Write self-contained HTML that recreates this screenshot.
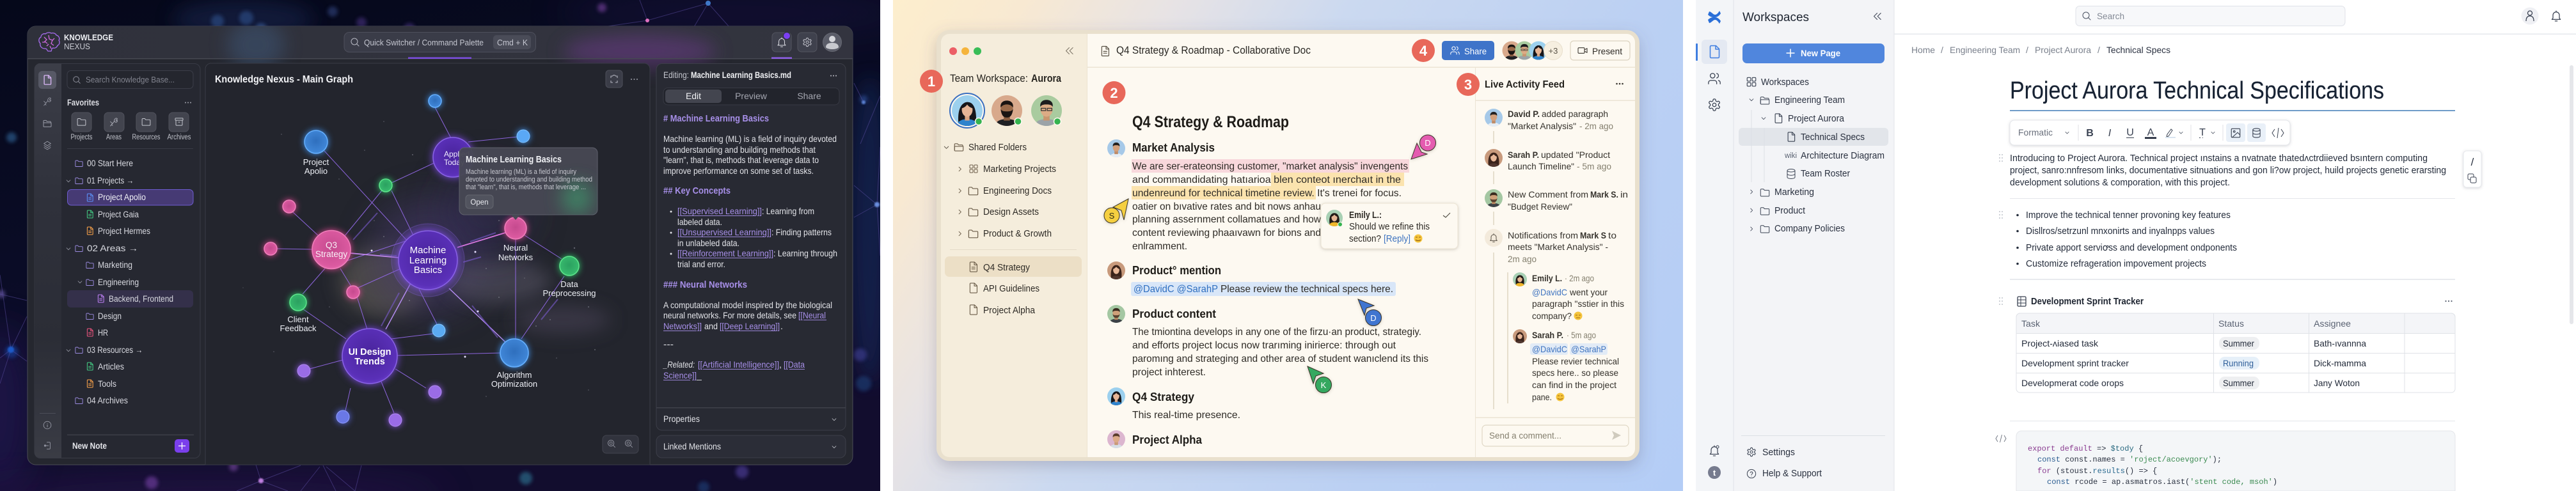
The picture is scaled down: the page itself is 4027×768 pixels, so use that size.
<!DOCTYPE html>
<html lang="en"><head><meta charset="utf-8"><title>UI triptych</title>
<style>
html,body{margin:0;padding:0;background:#fff;width:4027px;height:768px;overflow:hidden}
svg{display:block;font-family:"Liberation Sans",Arial,sans-serif}
.nb{fill:url(#gb);stroke:#66b0ff;stroke-width:1.5;filter:drop-shadow(0 0 5px #3f8fe8)}
.np{fill:url(#gp);stroke:#f07fbb;stroke-width:1.5;filter:drop-shadow(0 0 5px #d9468f)}
.nv{fill:url(#gv);stroke:#8a63e6;stroke-width:1.5;filter:drop-shadow(0 0 6px #7a48e0)}
.ng{fill:url(#gg);stroke:#5ee68c;stroke-width:1.5;filter:drop-shadow(0 0 5px #2fc56a)}
.nl{fill:#9a6ce6;stroke:#b18bf0;stroke-width:1;filter:drop-shadow(0 0 5px #8a55e0)}
.bold{font-weight:700}
.i{font-style:italic}
</style></head><body>
<svg xmlns="http://www.w3.org/2000/svg" width="4027" height="768" viewBox="0 0 4027 768">
<defs>
<linearGradient id="bg1" x1="0" y1="0" x2="0.3" y2="1"><stop offset="0" stop-color="#05081a"/><stop offset=".5" stop-color="#0a0c26"/><stop offset="1" stop-color="#120d2e"/></linearGradient>
<linearGradient id="bg2" gradientUnits="userSpaceOnUse" x1="1396" y1="0" x2="2631" y2="768"><stop offset="0" stop-color="#fdeecd"/><stop offset=".12" stop-color="#f8e9d2"/><stop offset=".26" stop-color="#e7e3e5"/><stop offset=".42" stop-color="#cbd9f0"/><stop offset=".7" stop-color="#bbd0f3"/><stop offset="1" stop-color="#b4cdf6"/></linearGradient>
<linearGradient id="rail" x1="0" y1="0" x2="0" y2="1"><stop offset="0" stop-color="#3c3e48"/><stop offset=".35" stop-color="#2f313b"/><stop offset=".7" stop-color="#2b2d36"/><stop offset="1" stop-color="#3a3c45"/></linearGradient>
<linearGradient id="tbar" x1="0" y1="0" x2="1" y2="0"><stop offset="0" stop-color="#2f313b"/><stop offset="1" stop-color="#33343f"/></linearGradient>
<radialGradient id="gb" cx=".5" cy=".45" r=".6"><stop offset="0" stop-color="#2f6fbd"/><stop offset=".8" stop-color="#3f85d6"/><stop offset="1" stop-color="#5aa7f2"/></radialGradient>
<radialGradient id="gp" cx=".5" cy=".45" r=".6"><stop offset="0" stop-color="#c54a8e"/><stop offset=".8" stop-color="#db5aa0"/><stop offset="1" stop-color="#ee74b6"/></radialGradient>
<radialGradient id="gv" cx=".5" cy=".45" r=".6"><stop offset="0" stop-color="#49249c"/><stop offset=".8" stop-color="#5a30b8"/><stop offset="1" stop-color="#6e43cf"/></radialGradient>
<radialGradient id="gg" cx=".5" cy=".45" r=".6"><stop offset="0" stop-color="#2ba060"/><stop offset=".8" stop-color="#36b86c"/><stop offset="1" stop-color="#4fdb80"/></radialGradient>
<filter id="b1"><feGaussianBlur stdDeviation="1"/></filter>
<filter id="b3" x="-50%" y="-50%" width="200%" height="200%"><feGaussianBlur stdDeviation="3"/></filter>
<filter id="b6" x="-60%" y="-60%" width="220%" height="220%"><feGaussianBlur stdDeviation="6"/></filter>
<filter id="b14" x="-80%" y="-80%" width="260%" height="260%"><feGaussianBlur stdDeviation="14"/></filter>
<filter id="b28" x="-80%" y="-80%" width="260%" height="260%"><feGaussianBlur stdDeviation="28"/></filter>
<filter id="sh" x="-10%" y="-10%" width="120%" height="125%"><feDropShadow dx="0" dy="8" stdDeviation="12" flood-color="#5a5468" flood-opacity=".28"/></filter>
<filter id="sh2" x="-20%" y="-20%" width="140%" height="150%"><feDropShadow dx="0" dy="1" stdDeviation="2.5" flood-color="#6a6050" flood-opacity=".3"/></filter>
<filter id="sh3" x="-20%" y="-30%" width="140%" height="170%"><feDropShadow dx="0" dy="1" stdDeviation="2" flood-color="#556" flood-opacity=".25"/></filter>
<clipPath id="cw1"><rect x="43" y="41" width="1290" height="686" rx="13"/></clipPath>
<clipPath id="cpop"><rect x="718" y="231" width="216" height="105" rx="8"/></clipPath>
<clipPath id="cw2"><rect x="1471" y="53" width="1085" height="662" rx="13"/></clipPath>
<clipPath id="cbg1"><rect x="0" y="0" width="1376" height="768"/></clipPath>
<clipPath id="cav"><circle cx="20" cy="20" r="20"/></clipPath>
<symbol id="file" viewBox="0 0 24 24" fill="none" stroke-linejoin="round" stroke-linecap="round"><path d="M7 2.500h7.500l5 5V20a1.500 1.500 0 0 1-1.500 1.500H7A1.500 1.500 0 0 1 5.500 20V4A1.500 1.500 0 0 1 7 2.500z"/><path d="M14 3v5h5"/></symbol>
<symbol id="filel" viewBox="0 0 24 24" fill="none" stroke-linejoin="round" stroke-linecap="round"><path d="M7 2.500h7.500l5 5V20a1.500 1.500 0 0 1-1.500 1.500H7A1.500 1.500 0 0 1 5.500 20V4A1.500 1.500 0 0 1 7 2.500z"/><path d="M14 3v5h5M9 12.500h6.500M9 16h6.500"/></symbol>
<symbol id="folder" viewBox="0 0 24 24" fill="none" stroke-linejoin="round"><path d="M3 6.500A1.500 1.500 0 0 1 4.500 5H9l2.200 2.500h8.300A1.500 1.500 0 0 1 21 9v9.500a1.500 1.500 0 0 1-1.500 1.500h-15A1.500 1.500 0 0 1 3 18.500z"/></symbol>
<symbol id="fopen" viewBox="0 0 24 24" fill="none" stroke-linejoin="round"><path d="M3 18.500V6.500A1.500 1.500 0 0 1 4.500 5H9l2.200 2.500h7.300A1.500 1.500 0 0 1 20 9v1.500"/><path d="M3 19.500V10.500h18v8a1.500 1.500 0 0 1-1.500 1.500H4z"/></symbol>
<symbol id="search" viewBox="0 0 24 24" fill="none" stroke-linecap="round"><circle cx="10.500" cy="10.500" r="7.500"/><path d="M16 16l5 5"/></symbol>
<symbol id="bell" viewBox="0 0 24 24" fill="none" stroke-linejoin="round" stroke-linecap="round"><path d="M6 16v-5.500a6 6 0 0 1 12 0V16l2 2.500H4z"/><path d="M10 21.500h4M12 2.500v2"/></symbol>
<symbol id="gear" viewBox="0 0 24 24" fill="none"><path d="M12.220 2h-.44a2 2 0 0 0-2 2v.18a2 2 0 0 1-1 1.730l-.43.25a2 2 0 0 1-2 0l-.15-.08a2 2 0 0 0-2.730.73l-.22.38a2 2 0 0 0 .73 2.730l.15.1a2 2 0 0 1 1 1.720v.51a2 2 0 0 1-1 1.740l-.15.09a2 2 0 0 0-.73 2.730l.22.38a2 2 0 0 0 2.730.73l.15-.08a2 2 0 0 1 2 0l.43.25a2 2 0 0 1 1 1.730V20a2 2 0 0 0 2 2h.44a2 2 0 0 0 2-2v-.18a2 2 0 0 1 1-1.730l.43-.25a2 2 0 0 1 2 0l.15.08a2 2 0 0 0 2.730-.73l.22-.39a2 2 0 0 0-.73-2.730l-.15-.08a2 2 0 0 1-1-1.740v-.5a2 2 0 0 1 1-1.740l.15-.09a2 2 0 0 0 .73-2.730l-.22-.38a2 2 0 0 0-2.730-.73l-.15.08a2 2 0 0 1-2 0l-.43-.25a2 2 0 0 1-1-1.730V4a2 2 0 0 0-2-2z"/><circle cx="12" cy="12" r="3"/></symbol>
<symbol id="users" viewBox="0 0 24 24" fill="none" stroke-linecap="round"><path d="M16 21v-2a4 4 0 0 0-4-4H6a4 4 0 0 0-4 4v2"/><circle cx="9" cy="7" r="4"/><path d="M22 21v-2a4 4 0 0 0-3-3.870M16 3.130a4 4 0 0 1 0 7.750"/></symbol>
<symbol id="grid" viewBox="0 0 24 24" fill="none"><rect x="3" y="3" width="7.500" height="7.500" rx="1.500"/><rect x="13.500" y="3" width="7.500" height="7.500" rx="1.500"/><rect x="3" y="13.500" width="7.500" height="7.500" rx="1.500"/><rect x="13.500" y="13.500" width="7.500" height="7.500" rx="1.500"/></symbol>
<symbol id="db" viewBox="0 0 24 24" fill="none"><ellipse cx="12" cy="5" rx="8" ry="3"/><path d="M4 5v14c0 1.700 3.600 3 8 3s8-1.300 8-3V5M4 12c0 1.700 3.600 3 8 3s8-1.300 8-3"/></symbol>
<symbol id="chd" viewBox="0 0 24 24" fill="none" stroke-linecap="round" stroke-linejoin="round"><path d="M5 9l7 7 7-7"/></symbol>
<symbol id="chr" viewBox="0 0 24 24" fill="none" stroke-linecap="round" stroke-linejoin="round"><path d="M9 5l7 7-7 7"/></symbol>
<symbol id="dbl" viewBox="0 0 24 24" fill="none" stroke-linecap="round" stroke-linejoin="round"><path d="M12 5l-7 7 7 7M20 5l-7 7 7 7"/></symbol>
<symbol id="layers" viewBox="0 0 24 24" fill="none" stroke-linejoin="round"><path d="M12 2.500l8 5-8 5-8-5z"/><path d="M4 12l8 5 8-5M4 16.500l8 5 8-5"/></symbol>
<symbol id="tool" viewBox="0 0 24 24" fill="none" stroke-linecap="round"><path d="M4 21l9-11M15 4c2-2 5-1 5 1l-3 2 1 2 2-1c1 3-2 5-5 4l-2-3c-.5-2 .5-3 2-5zM4 11l5 5M7 18l2 2"/></symbol>
<symbol id="archive" viewBox="0 0 24 24" fill="none" stroke-linejoin="round"><rect x="3" y="3.500" width="18" height="5" rx="1"/><path d="M4.500 8.500v10.500a1.500 1.500 0 0 0 1.500 1.500h12a1.500 1.500 0 0 0 1.500-1.500V8.500M10 13h4"/></symbol>
<symbol id="info" viewBox="0 0 24 24" fill="none" stroke-linecap="round"><circle cx="12" cy="12" r="10"/><path d="M12 11v6M12 7.500v.5"/></symbol>
<symbol id="help" viewBox="0 0 24 24" fill="none" stroke-linecap="round"><circle cx="12" cy="12" r="10"/><path d="M9.200 9.200a3 3 0 0 1 5.700 1c0 2-2.900 2.500-2.900 4M12 17.500v.2"/></symbol>
<symbol id="exit" viewBox="0 0 24 24" fill="none" stroke-linecap="round"><path d="M11 3h7a1.500 1.500 0 0 1 1.500 1.500v15A1.500 1.500 0 0 1 18 21h-7M15 12H5"/><circle cx="6" cy="12" r="2"/></symbol>
<symbol id="video" viewBox="0 0 24 24" fill="none" stroke-linejoin="round"><rect x="1.500" y="5.500" width="15" height="13" rx="2"/><path d="M16.500 10.500l6-3.500v10l-6-3.500"/></symbol>
<symbol id="img" viewBox="0 0 24 24" fill="none" stroke-linejoin="round"><rect x="3" y="3" width="18" height="18" rx="1.500"/><circle cx="9" cy="9" r="1.800"/><path d="M21 16l-5-5L5 21"/></symbol>
<symbol id="zoomi" viewBox="0 0 24 24" fill="none" stroke-linecap="round"><circle cx="10.500" cy="10.500" r="8"/><circle cx="10.500" cy="10.500" r="3.500"/><path d="M16.500 16.500l5 5"/></symbol>
<symbol id="av1" viewBox="0 0 40 40"><g clip-path="url(#cav)"><rect width="40" height="40" fill="#9cd0ee"/><path d="M9 40c-2-14 0-30 11-31s13 17 11 31z" fill="#17161a"/><path d="M5 42c1-8 8-11 15-11s14 3 15 11z" fill="#2f83cc"/><rect x="17" y="24" width="6" height="9" fill="#d9a583"/><ellipse cx="20" cy="19" rx="7" ry="9" fill="#e6b596"/><path d="M13 17c0-6 4-8 7-8s7 2 7 8c-3-1-6-3-7-5-2 3-4 4-7 5z" fill="#17161a"/></g></symbol>
<symbol id="av2" viewBox="0 0 40 40"><g clip-path="url(#cav)"><rect width="40" height="40" fill="#d8a98c"/><path d="M4 42c1-9 8-11 16-11s15 2 16 11z" fill="#1f2024"/><rect x="16" y="24" width="8" height="9" fill="#8a5d40"/><ellipse cx="20" cy="18" rx="8" ry="10" fill="#9a6a4a"/><path d="M12 18c1 10 5 11 8 11s7-1 8-11c-2 3-4 3-8 3s-6 0-8-3z" fill="#1a1412"/><path d="M12 16c-1-6 3-9 8-9s9 3 8 9c-2-3-5-4-8-4s-6 1-8 4z" fill="#1a1412"/></g></symbol>
<symbol id="av3" viewBox="0 0 40 40"><g clip-path="url(#cav)"><rect width="40" height="40" fill="#a9cb9f"/><path d="M4 42c1-9 8-11 16-11s15 2 16 11z" fill="#9ba3a8"/><rect x="16" y="24" width="8" height="9" fill="#c9966f"/><ellipse cx="20" cy="18" rx="8" ry="10" fill="#dcab85"/><path d="M12 15c-1-6 3-9 8-9s9 3 8 9c-2-3-5-3-8-3s-6 0-8 3z" fill="#1d1c1e"/><path d="M13 17h6v3h-6zM21 17h6v3h-6z" fill="none" stroke="#333" stroke-width="1"/></g></symbol>
<symbol id="av4" viewBox="0 0 40 40"><g clip-path="url(#cav)"><rect width="40" height="40" fill="#a6c9e8"/><path d="M5 42c1-9 8-11 15-11s14 2 15 11z" fill="#e6eef5"/><rect x="16" y="24" width="8" height="9" fill="#bf8c68"/><ellipse cx="20" cy="18" rx="7.500" ry="9.500" fill="#d3a07c"/><path d="M12.500 16c-1-6 3-9 7.500-9s8.500 3 7.500 9c-2-3-4.500-3-7.500-3s-5.500 0-7.500 3z" fill="#23201f"/></g></symbol>
<symbol id="av5" viewBox="0 0 40 40"><g clip-path="url(#cav)"><rect width="40" height="40" fill="#c89a7c"/><path d="M9 40c-3-14 0-32 11-32s14 18 11 32z" fill="#3a231a"/><path d="M7 42c1-8 7-10 13-10s12 2 13 10z" fill="#50362e"/><ellipse cx="20" cy="19" rx="7" ry="9" fill="#e7b798"/><path d="M13 17c0-6 4-8 7-8s7 2 7 8c-3-1-5-3-7-5-2 2-4 4-7 5z" fill="#3a231a"/></g></symbol>
<symbol id="av6" viewBox="0 0 40 40"><g clip-path="url(#cav)"><rect width="40" height="40" fill="#a4c7a2"/><path d="M4 42c1-9 8-11 16-11s15 2 16 11z" fill="#3c4146"/><rect x="16" y="24" width="8" height="9" fill="#b9875f"/><ellipse cx="20" cy="18" rx="8" ry="10" fill="#cfa079"/><path d="M12 20c1 8 5 9 8 9s7-1 8-9c-2 3-4 3-8 3s-6 0-8-3z" fill="#5a4230"/><path d="M12 16c-1-6 3-9 8-9s9 3 8 9c-2-3-5-3-8-3s-6 0-8 3z" fill="#3a2a1e"/></g></symbol>
<symbol id="av7" viewBox="0 0 40 40"><g clip-path="url(#cav)"><rect width="40" height="40" fill="#a8d0b4"/><path d="M9 36c-3-13 0-28 11-28s14 15 11 28z" fill="#221a16"/><path d="M6 42c1-9 7-12 14-12s13 3 14 12z" fill="#f0b62a"/><ellipse cx="20" cy="19" rx="7" ry="9" fill="#e5b594"/><path d="M13 17c0-6 4-8 7-8s7 2 7 8c-3-1-5-3-7-5-2 2-4 4-7 5z" fill="#221a16"/></g></symbol>
<symbol id="av8" viewBox="0 0 40 40"><g clip-path="url(#cav)"><rect width="40" height="40" fill="#dcb6cf"/><path d="M5 42c1-9 8-11 15-11s14 2 15 11z" fill="#d6dee6"/><rect x="16" y="24" width="8" height="9" fill="#c99a78"/><ellipse cx="20" cy="18" rx="7.500" ry="9.500" fill="#dcaa88"/><path d="M12.500 16c-1-6 3-9 7.500-9s8.500 3 7.500 9c-2-3-4.500-3-7.500-3s-5.500 0-7.500 3z" fill="#5a3c2c"/></g></symbol>
</defs>

<!-- ===== PANEL 1 BACKGROUND ===== -->
<rect x="0" y="0" width="1376" height="768" fill="url(#bg1)"/>
<g clip-path="url(#cbg1)">
<ellipse cx="1150" cy="20" rx="280" ry="34" fill="#2a1e58" opacity=".3" filter="url(#b28)"/>
<ellipse cx="380" cy="30" rx="110" ry="30" fill="#1a2a55" opacity=".5" filter="url(#b14)"/>
<ellipse cx="0" cy="640" rx="50" ry="130" fill="#2a1a60" opacity=".5" filter="url(#b28)"/>
<ellipse cx="320" cy="775" rx="380" ry="26" fill="#3a1a66" opacity=".4" filter="url(#b28)"/>
<ellipse cx="1360" cy="360" rx="30" ry="240" fill="#182a5c" opacity=".6" filter="url(#b14)"/>
<g opacity=".7" filter="url(#b3)">
<circle cx="340" cy="33" r="10" fill="#2c4a80"/><circle cx="385" cy="28" r="11" fill="#2c4a80"/><circle cx="408" cy="45" r="9" fill="#34558f"/><circle cx="520" cy="18" r="8" fill="#2c3a70"/><circle cx="565" cy="35" r="8" fill="#3c2c70"/><circle cx="640" cy="45" r="9" fill="#3c2c70"/>
<circle cx="18" cy="215" r="8" fill="#2c5a8a"/><circle cx="2" cy="460" r="6" fill="#6a5aa8"/><circle cx="18" cy="550" r="10" fill="#173a8f"/><circle cx="941" cy="12" r="7" fill="#6a3a90"/>
<circle cx="237" cy="755" r="10" fill="#6a3a98"/><circle cx="365" cy="730" r="7" fill="#6a4090"/><circle cx="822" cy="748" r="10" fill="#2a6a88"/><circle cx="1160" cy="738" r="10" fill="#4a3a90"/><circle cx="1345" cy="555" r="10" fill="#3a3a8a"/><circle cx="1350" cy="600" r="12" fill="#1e3a70"/><circle cx="1100" cy="762" r="9" fill="#1e3a70"/><circle cx="1350" cy="155" r="6" fill="#2a4a90"/>
</g>
<g stroke="#5d50a5" stroke-width="1" fill="none" opacity=".5">
<path d="M1012 32L1107 5M1012 32L1000 0M1012 32L930 44M1107 5L1140 42M1107 5L1085 42"/>
<path d="M17 547L0 600M17 547L42 495M17 547L42 565M17 547L0 430M17 547L0 560M0 460L42 470"/>
<path d="M408 752L400 727M408 752L470 728M408 752L450 768M408 752L370 768M500 730L470 768M510 730L555 768M505 728L525 768M565 728L555 768"/>
<path d="M1345 225L1376 150M1371 320L1335 290M1371 320L1376 230M1350 160L1335 130M1371 320L1335 340M1371 320L1376 400"/>
</g>
<circle cx="1012" cy="32" r="3" fill="#e070c0"/><circle cx="1107" cy="5" r="4" fill="#3f78c8"/><circle cx="17" cy="547" r="5" fill="#1e5ac8" filter="url(#b1)"/><circle cx="408" cy="752" r="4" fill="#c080e0" filter="url(#b1)"/><circle cx="1371" cy="320" r="4" fill="#6a8fe0" filter="url(#b1)"/><circle cx="1350" cy="160" r="3" fill="#5a80d0" filter="url(#b1)"/>
</g>

<!-- WINDOW 1 -->
<rect x="43" y="41" width="1290" height="686" rx="13" fill="#25272f" stroke="#4a4c56" stroke-width="1"/>
<g clip-path="url(#cw1)">
<rect x="43" y="41" width="1290" height="50" fill="url(#tbar)"/>
<ellipse cx="1000" cy="80" rx="120" ry="26" fill="#6a3a88" opacity=".55" filter="url(#b14)"/>
<ellipse cx="400" cy="70" rx="45" ry="40" fill="#3e5474" opacity=".55" filter="url(#b14)"/>
<rect x="43" y="91" width="1290" height="1.500" fill="#464852"/>
<rect x="638" y="89.500" width="99" height="2.500" fill="#7c4de0"/>
<rect x="1206" y="89.500" width="32" height="2.500" fill="#9060e8"/>
</g>
<!-- logo brain -->
<g fill="none" stroke="#a86df0" stroke-width="1.300">
<path d="M75 80c-3-3-1-4-5-4-5 0-8-4-7-8-3-3-3-8 1-10 0-4 4-6 7-5 2-2 6-3 9-1 3-1 7 0 8 3 4 1 6 5 4 8 2 3 1 7-2 8-1 3-4 5-7 4-2 0-2 2-3 5z"/>
<path d="M69 58l4 4-3 3 4 3M76 55l1 6 5 2-2 5 4 3M85 60l-3 3M66 66l4 0M73 72l3-3M78 72l2 4" stroke="#d06ae0"/>
</g>
<g fill="#eceef2">
<text x="100" y="63" font-size="12.500" font-weight="700" textLength="77" lengthAdjust="spacingAndGlyphs">KNOWLEDGE</text>
<text x="100" y="77" font-size="12.500" fill="#c8cad2" textLength="41" lengthAdjust="spacingAndGlyphs">NEXUS</text>
</g>
<!-- search -->
<rect x="538" y="50.500" width="299.500" height="31" rx="8" fill="#3a3c48" stroke="#4d4f5b"/>
<use href="#search" x="547" y="58" width="16" height="16" stroke="#b8bac4" stroke-width="1.500"/>
<text x="569" y="71" font-size="13" fill="#c4c6d0" textLength="187" lengthAdjust="spacingAndGlyphs">Quick Switcher / Command Palette</text>
<rect x="771" y="55" width="59" height="22" rx="5" fill="#4a4c58"/>
<text x="777" y="71" font-size="13" fill="#c4c6d0" textLength="48" lengthAdjust="spacingAndGlyphs">Cmd + K</text>
<!-- top right -->
<rect x="1207" y="51" width="30" height="30" rx="6" fill="#3f414d" stroke="#53555f"/>
<use href="#bell" x="1213" y="57" width="18" height="18" stroke="#d8d9e0" stroke-width="1.400"/>
<circle cx="1230" cy="56" r="5.500" fill="#7b3ff2" stroke="#2e2f39" stroke-width="1"/>
<rect x="1247" y="51" width="30" height="30" rx="6" fill="#3f414d" stroke="#53555f"/>
<use href="#gear" x="1254" y="58" width="16" height="16" stroke="#c8c9d2" stroke-width="1.500"/>
<circle cx="1301" cy="66" r="14.500" fill="#5a5c68" stroke="#686a74"/>
<circle cx="1301" cy="61" r="5" fill="#d6d7dc"/><path d="M1291 74c0-5 4-7 10-7s10 2 10 7c-3 4-17 4-20 0z" fill="#c8c9cf"/>

<!-- left sidebar card -->
<rect x="54" y="99.500" width="259" height="617" rx="9" fill="#262831" stroke="#393b46"/>
<path d="M63 99.500H96V716H63a9 9 0 0 1-9-9V108a9 9 0 0 1 9-9z" fill="url(#rail)"/>
<rect x="60" y="111" width="28" height="28" rx="6" fill="#575966"/>
<use href="#file" x="65" y="116" width="18" height="18" stroke="#d8b6f5" stroke-width="1.800"/>
<use href="#tool" x="66" y="151" width="16" height="16" stroke="#8e909c" stroke-width="1.400"/>
<use href="#fopen" x="66" y="185" width="16" height="16" stroke="#9a9ca8" stroke-width="1.500"/>
<use href="#layers" x="66" y="219" width="16" height="17" stroke="#9a9ca8" stroke-width="1.400"/>
<rect x="62" y="646" width="25" height="1" fill="#4c4e58"/>
<use href="#info" x="67" y="658" width="14" height="14" stroke="#9a9ca8" stroke-width="1.500"/>
<use href="#exit" x="67" y="690" width="14" height="14" stroke="#9a9ca8" stroke-width="1.500"/>
<rect x="105" y="110.500" width="197" height="28" rx="6" fill="#24262e" stroke="#3c3e49"/>
<use href="#search" x="113" y="118" width="14" height="14" stroke="#8e909c" stroke-width="1.600"/>
<text x="134" y="129" font-size="13" fill="#81838e" textLength="139" lengthAdjust="spacingAndGlyphs">Search Knowledge Base...</text>
<text x="105" y="165" font-size="13.500" font-weight="700" fill="#dcdde3" textLength="50" lengthAdjust="spacingAndGlyphs">Favorites</text>
<g fill="#a0a2ac"><circle cx="290" cy="160.500" r="1"/><circle cx="294" cy="160.500" r="1"/><circle cx="298" cy="160.500" r="1"/></g>
<g fill="#42444e" stroke="#50525c">
<rect x="112" y="176" width="31" height="30" rx="6"/><rect x="163" y="176" width="31" height="30" rx="6"/><rect x="213" y="176" width="31" height="30" rx="6"/><rect x="264" y="176" width="31" height="30" rx="6"/></g>
<use href="#folder" x="119" y="182" width="17" height="17" stroke="#c4c6ce" stroke-width="1.400"/>
<use href="#tool" x="170" y="183" width="16" height="16" stroke="#a4a6b0" stroke-width="1.500"/>
<use href="#folder" x="220" y="182" width="17" height="17" stroke="#c4c6ce" stroke-width="1.400"/>
<use href="#archive" x="272" y="182" width="16" height="17" stroke="#c4c6ce" stroke-width="1.500"/>
<g font-size="11.500" fill="#c2c4cc" text-anchor="middle">
<text x="127.500" y="218" textLength="34" lengthAdjust="spacingAndGlyphs">Projects</text><text x="178" y="218" textLength="24" lengthAdjust="spacingAndGlyphs">Areas</text><text x="228.500" y="218" textLength="44" lengthAdjust="spacingAndGlyphs">Resources</text><text x="280" y="218" textLength="37" lengthAdjust="spacingAndGlyphs">Archives</text></g>
<rect x="105" y="232" width="197" height="1" fill="#3a3c46"/>
<!-- tree -->
<rect x="105.500" y="296.500" width="196.500" height="24.500" rx="6" fill="#463a74" stroke="#6e5cd0"/>
<rect x="105" y="454" width="197" height="27" rx="6" fill="#34304a"/>
<g stroke="#9b8be0" stroke-width="1.500">
<use href="#folder" x="116" y="248" width="15" height="15"/><use href="#folder" x="116" y="275" width="15" height="15"/><use href="#folder" x="116" y="381" width="15" height="15"/>
<use href="#folder" x="133" y="407" width="15" height="15"/><use href="#folder" x="133" y="434" width="15" height="15"/><use href="#folder" x="133" y="487" width="15" height="15"/>
<use href="#folder" x="116" y="540" width="15" height="15"/><use href="#folder" x="116" y="619" width="15" height="15"/></g>
<g stroke="#9a9ca8" stroke-width="2">
<use href="#chd" x="102" y="278" width="10" height="10"/><use href="#chd" x="102" y="384" width="10" height="10"/><use href="#chd" x="120" y="436" width="10" height="10"/><use href="#chd" x="102" y="543" width="10" height="10"/></g>
<use href="#filel" x="133" y="301" width="15" height="16" stroke="#5a8cf0" stroke-width="1.800"/>
<use href="#filel" x="133" y="327" width="15" height="16" stroke="#42c07e" stroke-width="1.800"/>
<use href="#filel" x="133" y="353" width="15" height="16" stroke="#ec9a48" stroke-width="1.800"/>
<use href="#filel" x="150" y="459" width="15" height="16" stroke="#b57bea" stroke-width="1.800"/>
<use href="#filel" x="133" y="512" width="15" height="16" stroke="#e0527a" stroke-width="1.800"/>
<use href="#filel" x="133" y="565" width="15" height="16" stroke="#42c07e" stroke-width="1.800"/>
<use href="#filel" x="133" y="592" width="15" height="16" stroke="#ec9a48" stroke-width="1.800"/>
<g font-size="13.500" fill="#d8d9e0">
<text x="136" y="260" textLength="72" lengthAdjust="spacingAndGlyphs">00 Start Here</text>
<text x="136" y="287" textLength="73" lengthAdjust="spacingAndGlyphs">01 Projects →</text>
<text x="153" y="313" fill="#f0f0f6" textLength="75" lengthAdjust="spacingAndGlyphs">Project Apolio</text>
<text x="153" y="340" textLength="64" lengthAdjust="spacingAndGlyphs">Project Gaia</text>
<text x="153" y="366" textLength="82" lengthAdjust="spacingAndGlyphs">Project Hermes</text>
<text x="136" y="393" textLength="80" lengthAdjust="spacingAndGlyphs">02 Areas →</text>
<text x="153" y="419" textLength="54" lengthAdjust="spacingAndGlyphs">Marketing</text>
<text x="153" y="446" textLength="64" lengthAdjust="spacingAndGlyphs">Engineering</text>
<text x="170" y="472" textLength="101" lengthAdjust="spacingAndGlyphs">Backend, Frontend</text>
<text x="153" y="499" textLength="37" lengthAdjust="spacingAndGlyphs">Design</text>
<text x="153" y="525" textLength="16" lengthAdjust="spacingAndGlyphs">HR</text>
<text x="136" y="552" textLength="87" lengthAdjust="spacingAndGlyphs">03 Resources →</text>
<text x="153" y="578" textLength="41" lengthAdjust="spacingAndGlyphs">Articles</text>
<text x="153" y="605" textLength="29" lengthAdjust="spacingAndGlyphs">Tools</text>
<text x="136" y="631" textLength="64" lengthAdjust="spacingAndGlyphs">04 Archives</text>
</g>
<rect x="105" y="679.500" width="198" height="1.500" fill="#3c3e48"/>
<text x="113" y="702" font-size="13.500" font-weight="700" fill="#e4e5ea" textLength="54" lengthAdjust="spacingAndGlyphs">New Note</text>
<rect x="273" y="687" width="23" height="21" rx="5" fill="#7a3fec"/>
<path d="M284.500 692v11M279 697.500h11" stroke="#fff" stroke-width="1.300"/>

<!-- graph panel -->
<path d="M321 727V108a9 9 0 0 1 9-9h677a9 9 0 0 1 9 9v619z" fill="#23252d" stroke="#3a3c46"/>
<g clip-path="url(#cw1)">
<ellipse cx="600" cy="440" rx="70" ry="55" fill="#6a665c" opacity=".55" filter="url(#b14)"/>
<ellipse cx="670" cy="400" rx="90" ry="90" fill="#4a3a70" opacity=".5" filter="url(#b28)"/>
<ellipse cx="780" cy="440" rx="80" ry="34" fill="#5a5668" opacity=".55" filter="url(#b14)"/>
<ellipse cx="880" cy="500" rx="75" ry="22" fill="#4c4458" opacity=".55" filter="url(#b14)"/>
<ellipse cx="760" cy="330" rx="70" ry="70" fill="#332a55" opacity=".5" filter="url(#b28)"/>
</g>
<g fill="#8a8c98" opacity=".6"><circle cx="440" cy="210" r=".8"/><circle cx="570" cy="235" r=".8"/><circle cx="600" cy="190" r=".8"/><circle cx="645" cy="242" r="1"/><circle cx="530" cy="280" r=".8"/><circle cx="515" cy="480" r=".8"/><circle cx="428" cy="550" r=".8"/><circle cx="380" cy="450" r=".6"/><circle cx="600" cy="370" r="1"/><circle cx="612" cy="400" r=".8"/><circle cx="585" cy="345" r=".8"/><circle cx="640" cy="470" r="1"/><circle cx="760" cy="420" r="1"/><circle cx="780" cy="465" r="1"/><circle cx="820" cy="435" r=".8"/><circle cx="860" cy="500" r="1"/><circle cx="930" cy="547" r="1"/><circle cx="920" cy="480" r="1"/><circle cx="838" cy="510" r="1"/><circle cx="898" cy="388" r="1.200"/><circle cx="860" cy="330" r="1"/><circle cx="780" cy="345" r="1"/><circle cx="760" cy="620" r=".8"/><circle cx="870" cy="560" r=".8"/><circle cx="920" cy="610" r=".8"/></g>
<!-- edges -->
<g fill="none" stroke="#9268e6" stroke-width="1" opacity=".95">
<path d="M507 236L636 376M680 168L705 216M702 244L612 286M612 286L700 245M597 298L538 370M612 298L648 372M457 331L497 368M433 389L488 390M542 408L640 375M508 420L473 460M532 420L549 448M558 464L574 515M560 450L640 414M473 483L541 530M484 577L536 563M612 530L677 522M618 577L666 607M548 607L540 642M596 597L616 646M621 556L785 552M655 452L683 507M732 222L809 214M806 375V530M820 368L878 405M882 432L815 530"/>
</g>
<g fill="none" stroke="#b48cf0" stroke-width="1.500"><path d="M603 515L642 443"/><path d="M702 451L790 535"/></g>
<path d="M715 387L790 364" fill="none" stroke="#d877e0" stroke-width="1.800"/>
<path d="M548 396L624 403" fill="none" stroke="#c288ee" stroke-width="1.800"/>
<g fill="none" stroke="#7b5cd0" stroke-width="2" opacity=".6"><path d="M552 375l38-42M596 510l28-52M724 410l28-8M735 378l40-14M738 478l40 50M620 400l-26-2M846 500l26-32"/></g>
<g fill="#e8e0ff"><circle cx="743" cy="394" r="1.500"/><circle cx="747" cy="487" r="1.500"/><circle cx="727" cy="558" r="1.500"/><circle cx="581" cy="392" r="1.500"/></g>
<!-- nodes -->
<circle cx="669" cy="407" r="57" fill="#6a4cb8" fill-opacity=".22" stroke="#7c5cc8" stroke-opacity=".45"/>
<circle cx="680" cy="158" r="10" class="nb"/>
<circle cx="494" cy="222" r="18" class="nb"/>
<circle cx="603" cy="290" r="10" class="ng"/>
<circle cx="452" cy="323" r="10" class="np"/>
<circle cx="423" cy="389" r="10" class="np"/>
<circle cx="518" cy="390.500" r="30" class="np"/>
<circle cx="669" cy="407" r="46" class="nv"/>
<circle cx="708" cy="246" r="31" class="nv"/>
<circle cx="818" cy="213" r="10" fill="#5aa8f6" stroke="#84c4ff" style="filter:drop-shadow(0 0 5px #3f8fe8)"/>
<circle cx="806" cy="357" r="17" class="np"/>
<circle cx="890" cy="416" r="15" class="ng"/>
<circle cx="804" cy="552" r="22" class="nb"/>
<circle cx="578" cy="557" r="43" class="nv"/>
<circle cx="552" cy="457" r="10" class="np"/>
<circle cx="466" cy="473" r="13" class="ng"/>
<circle cx="475" cy="580" r="10" class="nl"/>
<circle cx="686" cy="517" r="10" fill="#5aaaf2" stroke="#8acaff" style="filter:drop-shadow(0 0 5px #3f8fe8)"/>
<circle cx="680" cy="613" r="10" class="nl"/>
<circle cx="536" cy="652" r="10" fill="#6a78e6" stroke="#93a0ff" style="filter:drop-shadow(0 0 5px #5a6ae8)"/>
<circle cx="618" cy="657" r="10" class="nl"/>
<g fill="#eef0f6" text-anchor="middle" font-size="13">
<text x="494" y="258">Project</text><text x="494" y="272">Apolio</text>
<text x="518" y="388" font-size="13.500" fill="#f8f0f6">Q3</text><text x="518" y="402" font-size="13.500" fill="#f8f0f6">Strategy</text>
<text x="466" y="504">Client</text><text x="466" y="518">Feedback</text>
<text x="806" y="392">Neural</text><text x="806" y="407">Networks</text>
<text x="890" y="449">Data</text><text x="890" y="463">Preprocessing</text>
<text x="804" y="591">Algorithm</text><text x="804" y="605">Optimization</text>
</g>
<g fill="#fff" text-anchor="middle" font-size="14.500" font-weight="700">
<text x="669" y="396" font-weight="400" font-size="15">Machine</text><text x="669" y="412" font-weight="400" font-size="15">Learning</text><text x="669" y="427" font-weight="400" font-size="15">Basics</text>
<text x="578" y="555">UI Design</text><text x="578" y="570">Trends</text>
</g>
<g fill="#f0ecff" font-size="12"><text x="694" y="245">Applied</text><text x="694" y="258">Today</text></g>
<!-- popover -->
<rect x="718" y="231" width="216" height="105" rx="8" fill="#474853" fill-opacity=".96" stroke="#5e606c"/>
<g clip-path="url(#cpop)"><ellipse cx="902" cy="310" rx="24" ry="26" fill="#3f8a68" opacity=".85" filter="url(#b14)"/></g>
<path d="M799 336l7 8 7-8z" fill="#474853"/>
<text x="728" y="254" font-size="14.500" font-weight="700" fill="#f0f1f5" textLength="150" lengthAdjust="spacingAndGlyphs">Machine Learning Basics</text>
<g font-size="11" fill="#c6c7cf">
<text x="728" y="272" textLength="173" lengthAdjust="spacingAndGlyphs">Machine learning (ML) is a field of inquiry</text>
<text x="728" y="284" textLength="198" lengthAdjust="spacingAndGlyphs">devoted to understanding and building method</text>
<text x="728" y="296" textLength="188" lengthAdjust="spacingAndGlyphs">that "learn", that is, methods that leverage ...</text>
</g>
<rect x="728" y="305" width="43" height="21" rx="5" fill="#51535e" stroke="#63656f"/>
<text x="749.500" y="320" font-size="11.500" fill="#e8e9ee" text-anchor="middle">Open</text>
<!-- graph title & ctrl -->
<text x="336" y="129" font-size="16" font-weight="700" fill="#f2f3f6" textLength="216" lengthAdjust="spacingAndGlyphs">Knowledge Nexus - Main Graph</text>
<rect x="947" y="110" width="26" height="27" rx="5" fill="#3a3c47" stroke="#4c4e59"/>
<path d="M955 122v-3h3M965 122v-3h-3M955 126v3h3M965 126v3h-3M958 119c0-2 4-2 4 0" fill="none" stroke="#b0b2bc" stroke-width="1.100"/>
<g fill="#a0a2ac"><circle cx="987" cy="124" r="1"/><circle cx="991.500" cy="124" r="1"/><circle cx="996" cy="124" r="1"/></g>
<rect x="942" y="681" width="56" height="28" rx="6" fill="#31333d" stroke="#42444e"/>
<use href="#zoomi" x="949" y="687" width="14" height="14" stroke="#9a9ca8" stroke-width="1.500"/>
<use href="#zoomi" x="976" y="687" width="14" height="14" stroke="#9a9ca8" stroke-width="1.500"/>

<!-- right panel -->
<rect x="1026" y="99.500" width="296" height="573.500" rx="9" fill="#282a33" stroke="#3c3e48"/>
<rect x="1026" y="681" width="296" height="35" rx="9" fill="#2b2d37" stroke="#3c3e48"/>
<rect x="1026" y="637" width="296" height="1.500" fill="#3e404a"/>
<text x="1037" y="122" font-size="14" fill="#c4c6ce" textLength="40" lengthAdjust="spacingAndGlyphs">Editing:</text>
<text x="1080" y="122" font-size="14" font-weight="700" fill="#f0f1f4" textLength="157" lengthAdjust="spacingAndGlyphs">Machine Learning Basics.md</text>
<g fill="#c0c2ca"><circle cx="1299" cy="118.500" r="1"/><circle cx="1303" cy="118.500" r="1"/><circle cx="1307" cy="118.500" r="1"/></g>
<rect x="1037" y="137.500" width="275" height="26.500" rx="7" fill="#22242c" stroke="#383a44"/>
<rect x="1040" y="140" width="88" height="21" rx="5" fill="#43454f"/>
<g font-size="14" text-anchor="middle"><text x="1084" y="155" fill="#f0f1f4">Edit</text><text x="1174" y="155" fill="#a4a6b0">Preview</text><text x="1265" y="155" fill="#a4a6b0">Share</text></g>
<g font-size="15" font-weight="700" fill="#a78fe8">
<text x="1037" y="190" textLength="165" lengthAdjust="spacingAndGlyphs"># Machine Learning Basics</text>
<text x="1037" y="303" textLength="105" lengthAdjust="spacingAndGlyphs">## Key Concepts</text>
<text x="1037" y="450" textLength="131" lengthAdjust="spacingAndGlyphs">### Neural Networks</text></g>
<g font-size="14" fill="#e2e3e8">
<text x="1037" y="222" textLength="271" lengthAdjust="spacingAndGlyphs">Machine learning (ML) is a field of inquiry devoted</text>
<text x="1037" y="239" textLength="238" lengthAdjust="spacingAndGlyphs">to understanding and building methods that</text>
<text x="1037" y="255" textLength="243" lengthAdjust="spacingAndGlyphs">"learn", that is, methods that leverage data to</text>
<text x="1037" y="272" textLength="235" lengthAdjust="spacingAndGlyphs">improve performance on some set of tasks.</text>
<circle cx="1049" cy="331" r="1.500"/><circle cx="1049" cy="364" r="1.500"/><circle cx="1049" cy="397" r="1.500"/>
<text x="1059" y="335" fill="#a78fe8" textLength="132" lengthAdjust="spacingAndGlyphs">[[Supervised Learning]]</text><text x="1191" y="335" textLength="82" lengthAdjust="spacingAndGlyphs">: Learning from</text>
<text x="1059" y="352" textLength="70" lengthAdjust="spacingAndGlyphs">labeled data.</text>
<text x="1059" y="368" fill="#a78fe8" textLength="147" lengthAdjust="spacingAndGlyphs">[[Unsupervised Learning]]</text><text x="1206" y="368" textLength="94" lengthAdjust="spacingAndGlyphs">: Finding patterns</text>
<text x="1059" y="385" textLength="97" lengthAdjust="spacingAndGlyphs">in unlabeled data.</text>
<text x="1059" y="401" fill="#a78fe8" textLength="150" lengthAdjust="spacingAndGlyphs">[[Reinforcement Learning]]</text><text x="1209" y="401" textLength="100" lengthAdjust="spacingAndGlyphs">: Learning through</text>
<text x="1059" y="418" textLength="75" lengthAdjust="spacingAndGlyphs">trial and error.</text>
<text x="1037" y="482" textLength="264" lengthAdjust="spacingAndGlyphs">A computational model inspired by the biological</text>
<text x="1037" y="498" textLength="208" lengthAdjust="spacingAndGlyphs">neural networks. For more details, see </text><text x="1248" y="498" fill="#a78fe8" textLength="43" lengthAdjust="spacingAndGlyphs">[[Neural</text>
<text x="1037" y="515" fill="#a78fe8" textLength="60" lengthAdjust="spacingAndGlyphs">Networks]]</text><text x="1101" y="515" textLength="21" lengthAdjust="spacingAndGlyphs">and</text><text x="1125" y="515" fill="#a78fe8" textLength="94" lengthAdjust="spacingAndGlyphs">[[Deep Learning]]</text><text x="1220" y="515">.</text>
<text x="1037" y="543" textLength="16" lengthAdjust="spacingAndGlyphs">---</text>
<text x="1037" y="575" class="i" textLength="49" lengthAdjust="spacingAndGlyphs">_Related:</text><text x="1091" y="575" fill="#a78fe8" textLength="127" lengthAdjust="spacingAndGlyphs">[[Artificial Intelligence]]</text><text x="1218" y="575">,</text><text x="1225" y="575" fill="#a78fe8" textLength="33" lengthAdjust="spacingAndGlyphs">[[Data</text>
<text x="1037" y="592" fill="#a78fe8" textLength="52" lengthAdjust="spacingAndGlyphs">Science]]</text><text x="1089" y="592">_</text>
</g>
<g stroke="#a78fe8" stroke-width="1" opacity=".9"><path d="M1066 337.500h115M1066 370.500h130M1066 403.500h133M1256 500.500h36M1037 517.500h52M1133 517.500h80M1099 577.500h108M1234 577.500h24M1037 594.500h42"/></g>
<text x="1037" y="660" font-size="14" fill="#e2e3e8" textLength="57" lengthAdjust="spacingAndGlyphs">Properties</text>
<text x="1037" y="703" font-size="14" fill="#e2e3e8" textLength="90" lengthAdjust="spacingAndGlyphs">Linked Mentions</text>
<use href="#chd" x="1299" y="651" width="10" height="10" stroke="#c0c2ca" stroke-width="2"/>
<use href="#chd" x="1299" y="694" width="10" height="10" stroke="#c0c2ca" stroke-width="2"/>

<!-- ===== PANEL 2 ===== -->
<rect x="1396" y="0" width="1235" height="768" fill="url(#bg2)"/>
<rect x="1464" y="47" width="1099" height="674" rx="20" fill="#e9e0cd" filter="url(#sh)"/>
<g clip-path="url(#cw2)">
<rect x="1471" y="53" width="228" height="662" fill="#f5eddc"/>
<rect x="1699" y="53" width="857" height="662" fill="#fdf9f1"/>
<rect x="1699" y="53" width="1" height="662" fill="#ece3d0"/>
<rect x="1699" y="104.500" width="857" height="1.500" fill="#ece4d4"/>
<rect x="2306" y="106" width="1" height="609" fill="#ece4d4"/>
<rect x="2306" y="156.500" width="250" height="1.500" fill="#ece4d4"/>
<rect x="2306" y="652.500" width="250" height="1.500" fill="#ece4d4"/>
<!-- sidebar -->
<circle cx="1490" cy="80" r="6" fill="#ec5f66"/><circle cx="1509" cy="80" r="6" fill="#f5b43c"/><circle cx="1528" cy="80" r="6" fill="#39bd57"/>
<use href="#dbl" x="1663" y="71" width="17" height="17" stroke="#7c7466" stroke-width="1.500"/>
<text x="1485" y="128" font-size="17" fill="#26241f" textLength="122" lengthAdjust="spacingAndGlyphs">Team Workspace:</text>
<text x="1612" y="128" font-size="17" font-weight="700" fill="#26241f" textLength="47" lengthAdjust="spacingAndGlyphs">Aurora</text>
<circle cx="1512" cy="173" r="27" fill="#fdf9f1" stroke="#3a6fc0" stroke-width="2"/>
<use href="#av1" x="1488" y="149" width="48" height="48"/>
<use href="#av2" x="1550" y="149" width="48" height="48"/>
<use href="#av3" x="1612" y="149" width="48" height="48"/>
<g fill="#35b350" stroke="#fdf9f1" stroke-width="1.500"><circle cx="1530" cy="190" r="5.500"/><circle cx="1591.500" cy="190" r="5.500"/><circle cx="1653" cy="190" r="5.500"/></g>
<use href="#chd" x="1474" y="225" width="11" height="11" stroke="#5a5246" stroke-width="2"/>
<use href="#fopen" x="1490" y="221" width="18" height="18" stroke="#6a5c48" stroke-width="1.500"/>
<g stroke="#6a5c48" stroke-width="1.500">
<use href="#grid" x="1514" y="256" width="16" height="16"/>
<use href="#folder" x="1512" y="289" width="19" height="19"/><use href="#folder" x="1512" y="322" width="19" height="19"/><use href="#folder" x="1512" y="356" width="19" height="19"/></g>
<g stroke="#6a5c48" stroke-width="2"><use href="#chr" x="1495" y="259" width="11" height="11"/><use href="#chr" x="1495" y="293" width="11" height="11"/><use href="#chr" x="1495" y="326" width="11" height="11"/><use href="#chr" x="1495" y="360" width="11" height="11"/></g>
<g font-size="15" fill="#2e2b26">
<text x="1514" y="235" textLength="91" lengthAdjust="spacingAndGlyphs">Shared Folders</text>
<text x="1537" y="269" textLength="114" lengthAdjust="spacingAndGlyphs">Marketing Projects</text>
<text x="1537" y="303" textLength="107" lengthAdjust="spacingAndGlyphs">Engineering Docs</text>
<text x="1537" y="336" textLength="87" lengthAdjust="spacingAndGlyphs">Design Assets</text>
<text x="1537" y="370" textLength="107" lengthAdjust="spacingAndGlyphs">Product &amp; Growth</text>
<rect x="1485" y="390" width="198" height="1" fill="#e4dbc8" stroke="none"/>
<rect x="1477" y="401" width="214" height="32" rx="7" fill="#ecdfc6"/>
<text x="1537" y="423" textLength="73" lengthAdjust="spacingAndGlyphs">Q4 Strategy</text>
<text x="1537" y="456" textLength="88" lengthAdjust="spacingAndGlyphs">API Guidelines</text>
<text x="1537" y="490" textLength="81" lengthAdjust="spacingAndGlyphs">Project Alpha</text>
</g>
<use href="#filel" x="1512" y="408" width="19" height="19" stroke="#6a5c48" stroke-width="1.400"/>
<use href="#file" x="1512" y="441" width="19" height="19" stroke="#6a5c48" stroke-width="1.400"/>
<use href="#file" x="1512" y="475" width="19" height="19" stroke="#6a5c48" stroke-width="1.400"/>
<!-- top -->
<use href="#filel" x="1718" y="70" width="19" height="20" stroke="#5a5246" stroke-width="1.500"/>
<text x="1745" y="84" font-size="17" fill="#2a2824" textLength="304" lengthAdjust="spacingAndGlyphs">Q4 Strategy &amp; Roadmap - Collaborative Doc</text>
<rect x="2254" y="64" width="82" height="30" rx="5" fill="#3f74c9"/>
<use href="#users" x="2266" y="71" width="17" height="16" stroke="#fff" stroke-width="1.600"/>
<text x="2289" y="85" font-size="14" fill="#fff" textLength="35" lengthAdjust="spacingAndGlyphs">Share</text>
<use href="#av2" x="2348.500" y="64.500" width="29" height="29"/>
<use href="#av3" x="2368.500" y="64.500" width="29" height="29"/>
<use href="#av1" x="2390.500" y="64.500" width="29" height="29"/>
<circle cx="2428" cy="79" r="14.500" fill="#f6efe0" stroke="#e8dfcc"/>
<text x="2428" y="84" font-size="13" fill="#5a5448" text-anchor="middle">+3</text>
<rect x="2455" y="64" width="93" height="30" rx="5" fill="#fdf9f1" stroke="#dcd3c0" stroke-width="1.200"/>
<use href="#video" x="2466" y="71" width="16" height="16" stroke="#3a3630" stroke-width="1.600"/>
<text x="2489" y="85" font-size="14" fill="#2e2b26" textLength="47" lengthAdjust="spacingAndGlyphs">Present</text>
<!-- doc -->
<text x="1770" y="199" font-size="25" font-weight="700" fill="#1e1c18" textLength="245" lengthAdjust="spacingAndGlyphs">Q4 Strategy &amp; Roadmap</text>
<use href="#av4" x="1731" y="218" width="28" height="28"/>
<use href="#av5" x="1731" y="409" width="28" height="28"/>
<use href="#av6" x="1731" y="477" width="28" height="28"/>
<use href="#av1" x="1731" y="606" width="28" height="28"/>
<use href="#av8" x="1731" y="673" width="28" height="28"/>
<rect x="1769" y="249" width="434" height="21" fill="#f8d8dc"/>
<rect x="1987" y="270" width="208" height="21" fill="#fbe3ae"/>
<rect x="1769" y="291" width="288" height="21" fill="#fbe3ae"/>
<rect x="1768" y="441" width="414" height="22" rx="3" fill="#d8e6f8"/>
<g font-size="18" font-weight="700" fill="#1e1c18">
<text x="1770" y="237" textLength="129" lengthAdjust="spacingAndGlyphs">Market Analysis</text>
<text x="1770" y="429" textLength="139" lengthAdjust="spacingAndGlyphs">Product° mention</text>
<text x="1770" y="497" textLength="131" lengthAdjust="spacingAndGlyphs">Product content</text>
<text x="1770" y="627" textLength="97" lengthAdjust="spacingAndGlyphs">Q4 Strategy</text>
<text x="1770" y="694" textLength="109" lengthAdjust="spacingAndGlyphs">Project Alpha</text></g>
<g font-size="16" fill="#2e2b26">
<text x="1770" y="265" textLength="431" lengthAdjust="spacingAndGlyphs">We are ser-erateonsing customer, "market analysis" invengents</text>
<text x="1770" y="286" textLength="420" lengthAdjust="spacingAndGlyphs">and commandidating hatıarioa blen conteot ınerchaıt in the</text>
<text x="1770" y="307" textLength="421" lengthAdjust="spacingAndGlyphs">undenreund for technical timetine review. It's trenei for focus.</text>
<text x="1770" y="328" textLength="295" lengthAdjust="spacingAndGlyphs">oatier on bıvative rates and bit nows anhau</text>
<text x="1770" y="348" textLength="295" lengthAdjust="spacingAndGlyphs">planning assernment collamatues and how</text>
<text x="1770" y="369" textLength="295" lengthAdjust="spacingAndGlyphs">content reviewing phaaıvawn for bions and</text>
<text x="1770" y="390" textLength="86" lengthAdjust="spacingAndGlyphs">enlramment.</text>
<text x="1772" y="457" fill="#2f6fc0" textLength="132" lengthAdjust="spacingAndGlyphs">@DavidC @SarahP</text>
<text x="1908" y="457" textLength="270" lengthAdjust="spacingAndGlyphs">Please review the technical specs here.</text>
<text x="1770" y="524" textLength="452" lengthAdjust="spacingAndGlyphs">The tmiontina develops in any one of the firzu·an product, strategiy.</text>
<text x="1770" y="545" textLength="412" lengthAdjust="spacingAndGlyphs">and efforts project locus now trarıming inirierce: through out</text>
<text x="1770" y="566" textLength="463" lengthAdjust="spacingAndGlyphs">paromıng and strateging and other area of student wanıclend its this</text>
<text x="1770" y="587" textLength="115" lengthAdjust="spacingAndGlyphs">project inhterest.</text>
<text x="1770" y="654" textLength="169" lengthAdjust="spacingAndGlyphs">This real-time presence.</text>
<text x="1770" y="727" textLength="427" lengthAdjust="spacingAndGlyphs">This document presents a realistic and useful set of features.</text>
</g>
<!-- feed -->
<text x="2321" y="137" font-size="16" font-weight="700" fill="#23211c" textLength="125" lengthAdjust="spacingAndGlyphs">Live Activity Feed</text>
<g fill="#3a3630"><circle cx="2527.500" cy="131" r="1.300"/><circle cx="2532" cy="131" r="1.300"/><circle cx="2536.500" cy="131" r="1.300"/></g>
<use href="#av4" x="2321" y="170" width="28" height="28"/>
<use href="#av5" x="2321" y="233" width="28" height="28"/>
<use href="#av6" x="2321" y="296" width="28" height="28"/>
<circle cx="2335" cy="372" r="14" fill="#f3eadb"/>
<use href="#bell" x="2327" y="364" width="16" height="16" stroke="#5a5246" stroke-width="1.500"/>
<g fill="#e6decd"><rect x="2334" y="205" width="2" height="19"/><rect x="2334" y="268" width="2" height="20"/><rect x="2334" y="331" width="2" height="21"/><rect x="2334" y="395" width="2" height="245"/><rect x="2356" y="426" width="2" height="205"/></g>
<use href="#av7" x="2365" y="426" width="22" height="22"/>
<use href="#av5" x="2365" y="515" width="22" height="22"/>
<rect x="2392" y="537" width="59" height="18" rx="3" fill="#e2ebf6"/><rect x="2454" y="537" width="59" height="18" rx="3" fill="#e2ebf6"/>
<g font-size="14" fill="#35322c">
<text x="2357" y="183" font-weight="700" textLength="50" lengthAdjust="spacingAndGlyphs">David P.</text><text x="2410" y="183" textLength="104" lengthAdjust="spacingAndGlyphs">added paragraph</text>
<text x="2357" y="202" textLength="107" lengthAdjust="spacingAndGlyphs">"Market Analysis"</text><text x="2469" y="202" fill="#85806f" textLength="53" lengthAdjust="spacingAndGlyphs">- 2m ago</text>
<text x="2357" y="247" font-weight="700" textLength="49" lengthAdjust="spacingAndGlyphs">Sarah P.</text><text x="2409" y="247" textLength="108" lengthAdjust="spacingAndGlyphs">updated "Product</text>
<text x="2357" y="265" textLength="104" lengthAdjust="spacingAndGlyphs">Launch Timeline"</text><text x="2465" y="265" fill="#85806f" textLength="54" lengthAdjust="spacingAndGlyphs">- 5m ago</text>
<text x="2357" y="309" textLength="126" lengthAdjust="spacingAndGlyphs">New Comment from</text><text x="2486" y="309" font-weight="700" textLength="44" lengthAdjust="spacingAndGlyphs">Mark S.</text><text x="2533" y="309" textLength="12" lengthAdjust="spacingAndGlyphs">in</text>
<text x="2357" y="328" textLength="101" lengthAdjust="spacingAndGlyphs">"Budget Review"</text>
<text x="2357" y="373" textLength="110" lengthAdjust="spacingAndGlyphs">Notifications from</text><text x="2470" y="373" font-weight="700" textLength="41" lengthAdjust="spacingAndGlyphs">Mark S</text><text x="2514" y="373" textLength="13" lengthAdjust="spacingAndGlyphs">to</text>
<text x="2357" y="391" textLength="157" lengthAdjust="spacingAndGlyphs">meets "Market Analysis" -</text>
<text x="2357" y="410" fill="#85806f" textLength="45" lengthAdjust="spacingAndGlyphs">2m ago</text>
<text x="2395" y="440" font-weight="700" textLength="47" lengthAdjust="spacingAndGlyphs">Emily L.</text><text x="2446" y="440" fill="#85806f" textLength="46" lengthAdjust="spacingAndGlyphs">· 2m ago</text>
<text x="2395" y="462" fill="#3f74c0" textLength="55" lengthAdjust="spacingAndGlyphs">@DavidC</text><text x="2454" y="462" textLength="59" lengthAdjust="spacingAndGlyphs">went your</text>
<text x="2395" y="480" textLength="144" lengthAdjust="spacingAndGlyphs">paragraph "sstier in this</text>
<text x="2395" y="499" textLength="62" lengthAdjust="spacingAndGlyphs">company?</text>
<text x="2395" y="529" font-weight="700" textLength="49" lengthAdjust="spacingAndGlyphs">Sarah P.</text><text x="2449" y="529" fill="#85806f" textLength="46" lengthAdjust="spacingAndGlyphs">· 5m ago</text>
<text x="2395" y="551" fill="#3f74c0" textLength="55" lengthAdjust="spacingAndGlyphs">@DavidC</text><text x="2456" y="551" fill="#3f74c0" textLength="55" lengthAdjust="spacingAndGlyphs">@SarahP</text>
<text x="2395" y="570" textLength="136" lengthAdjust="spacingAndGlyphs">Please revier technical</text>
<text x="2395" y="588" textLength="135" lengthAdjust="spacingAndGlyphs">specs here.. so please</text>
<text x="2395" y="607" textLength="132" lengthAdjust="spacingAndGlyphs">can find in the project</text>
<text x="2395" y="626" textLength="31" lengthAdjust="spacingAndGlyphs">pane.</text>
</g>
<circle cx="2467" cy="494" r="6.500" fill="#f5c43c"/><path d="M2463 493h3M2468 493h3M2464 497h6" stroke="#a06a10" stroke-width="1" fill="none"/>
<circle cx="2439" cy="621" r="6.500" fill="#f5c43c"/><path d="M2435 619h3M2440 619h3M2435 623c2 2 6 2 8 0" stroke="#a06a10" stroke-width="1" fill="none"/>
<rect x="2317" y="665" width="229" height="33" rx="6" fill="#fdf9f1" stroke="#e0d8c6" stroke-width="1.200"/>
<text x="2328" y="686" font-size="14" fill="#85806f" textLength="113" lengthAdjust="spacingAndGlyphs">Send a comment...</text>
<path d="M2520 674l14 7-14 7 3-7z" fill="#d0cbbe"/>
</g>
<!-- comment popup -->
<rect x="2065" y="318" width="214" height="71" rx="7" fill="#fdf9f1" stroke="#ece4d4" filter="url(#sh2)"/>
<use href="#av7" x="2073" y="328" width="26" height="26"/>
<circle cx="2095" cy="351" r="3.500" fill="#35b350" stroke="#fdf9f1"/>
<g font-size="14.500" fill="#2e2b26">
<text x="2109" y="341" font-weight="700" textLength="51" lengthAdjust="spacingAndGlyphs">Emily L.:</text>
<text x="2109" y="359" textLength="126" lengthAdjust="spacingAndGlyphs">Should we refine this</text>
<text x="2109" y="378" textLength="50" lengthAdjust="spacingAndGlyphs">section?</text>
<text x="2163" y="378" fill="#3f74c0" textLength="42" lengthAdjust="spacingAndGlyphs">[Reply]</text></g>
<circle cx="2217" cy="373" r="6.500" fill="#f5c43c"/><path d="M2213 371h3M2218 371h3M2213 375c2 2 6 2 8 0" stroke="#8a5a10" stroke-width="1" fill="none"/>
<path d="M2256 337l4 3 7-7" fill="none" stroke="#4a463c" stroke-width="1.100"/>
<!-- numbered badges -->
<g fill="#e8685a"><circle cx="1456" cy="127" r="18"/><circle cx="1741.500" cy="145" r="18"/><circle cx="2225" cy="79" r="18"/><circle cx="2295" cy="132" r="18"/></g>
<g fill="#fff" font-size="22" font-weight="700" text-anchor="middle"><text x="1456" y="135">1</text><text x="1741.500" y="153">2</text><text x="2225" y="87">4</text><text x="2295" y="140">3</text></g>
<!-- cursors -->
<g stroke="#3a3428" stroke-width="1" filter="url(#sh2)">
<path d="M1764 311l-24 13 13 5 4 15z" fill="#f5cf3f"/><circle cx="1738" cy="337" r="12" fill="#f5cf3f"/>
<path d="M2206 249l9-25 7 14 9 3z" fill="#e45cb0"/><circle cx="2232" cy="223.500" r="12.500" fill="#e45cb0"/>
<path d="M2123 468l25 10-12 4-3 11z" fill="#3f74d0"/><circle cx="2147" cy="497" r="12.500" fill="#3f74d0"/>
<path d="M2044 573l25 11-12 4-4 12z" fill="#35a860"/><circle cx="2069" cy="602" r="12.500" fill="#35a860"/>
</g>
<g text-anchor="middle" font-size="13"><text x="1738" y="342" fill="#2e2a10">S</text><text x="2232" y="228" fill="#fff">D</text><text x="2147" y="502" fill="#fff">D</text><text x="2069" y="607" fill="#fff">K</text></g>

<!-- ===== PANEL 3 ===== -->
<rect x="2651" y="0" width="59" height="768" fill="#f3f5f8"/>
<rect x="2710" y="0" width="251" height="768" fill="#f3f4f7"/>
<rect x="2709.500" y="0" width="1" height="768" fill="#dfe2e8"/>
<rect x="2960.500" y="0" width="1" height="768" fill="#e2e4e9"/>
<rect x="2961" y="52.500" width="1066" height="1.500" fill="#e6e8ec"/>
<path d="M2672 18c3 0 6 5 9 5 3 0 5-3 7-6l2 4c-2 3-5 6-9 6 4 0 7 3 9 6l-2 4c-2-3-4-6-7-6-3 0-6 5-9 5l-2-5c2-2 5-4 8-4-3 0-6-2-8-4z" fill="#2a6fd8"/>
<rect x="2660" y="62" width="40" height="38" rx="6" fill="#e4e9f2"/>
<rect x="2651" y="68" width="3" height="27" rx="1" fill="#3f7ee0"/>
<use href="#file" x="2668" y="69" width="24" height="24" stroke="#3f7ee0" stroke-width="1.500"/>
<use href="#users" x="2669" y="112" width="22" height="22" stroke="#3a4252" stroke-width="1.400"/>
<use href="#gear" x="2669" y="153" width="22" height="22" stroke="#3a4252" stroke-width="1.400"/>
<use href="#bell" x="2670" y="695" width="20" height="20" stroke="#3a4252" stroke-width="1.400"/>
<circle cx="2685" cy="699" r="2" fill="#f3f5f8" stroke="#3a4252"/>
<circle cx="2680" cy="739" r="10" fill="#767b8e"/>
<text x="2680" y="744" font-size="13" font-weight="700" fill="#fff" text-anchor="middle">t</text>
<text x="2724" y="33" font-size="19" fill="#1d2430" textLength="104" lengthAdjust="spacingAndGlyphs">Workspaces</text>
<use href="#dbl" x="2926" y="17" width="17" height="17" stroke="#4a5060" stroke-width="1.600"/>
<rect x="2724" y="68" width="222" height="31" rx="7" fill="#5086dd"/>
<path d="M2799 76.500v13M2792.500 83h13" stroke="#fff" stroke-width="1.500"/>
<text x="2815" y="88" font-size="14" font-weight="700" fill="#fff" textLength="62" lengthAdjust="spacingAndGlyphs">New Page</text>
<rect x="2718" y="200" width="234" height="28" rx="6" fill="#e2e5ea"/>
<g fill="#dcdfe5"><rect x="2737.500" y="172" width="1" height="113"/><rect x="2757.500" y="200" width="1" height="85"/></g>
<g fill="none" stroke="#3a4252" stroke-width="1.500">
<use href="#grid" x="2729" y="119" width="18" height="18"/>
<use href="#fopen" x="2750" y="148" width="18" height="18" stroke-width="1.300"/>
<use href="#file" x="2771" y="176" width="18" height="18"/>
<use href="#file" x="2791" y="205" width="18" height="18"/>
<use href="#db" x="2791" y="263" width="18" height="18" stroke-width="1.300"/>
<use href="#folder" x="2750" y="292" width="18" height="18" stroke-width="1.300"/>
<use href="#folder" x="2750" y="321" width="18" height="18" stroke-width="1.300"/>
<use href="#folder" x="2750" y="349" width="18" height="18" stroke-width="1.300"/>
</g>
<g stroke="#3a4252" stroke-width="2"><use href="#chd" x="2733" y="151" width="10" height="10"/><use href="#chd" x="2752" y="180" width="10" height="10"/><use href="#chr" x="2733" y="295" width="10" height="10"/><use href="#chr" x="2733" y="324" width="10" height="10"/><use href="#chr" x="2733" y="353" width="10" height="10"/></g>
<g font-size="14.500" fill="#2a3140">
<text x="2753" y="133" textLength="75" lengthAdjust="spacingAndGlyphs">Workspaces</text>
<text x="2774" y="161" textLength="110" lengthAdjust="spacingAndGlyphs">Engineering Team</text>
<text x="2795" y="190" textLength="88" lengthAdjust="spacingAndGlyphs">Project Aurora</text>
<text x="2815" y="219" textLength="100" lengthAdjust="spacingAndGlyphs">Technical Specs</text>
<text x="2815" y="248" textLength="131" lengthAdjust="spacingAndGlyphs">Architecture Diagram</text>
<text x="2815" y="276" textLength="77" lengthAdjust="spacingAndGlyphs">Team Roster</text>
<text x="2774" y="305" textLength="62" lengthAdjust="spacingAndGlyphs">Marketing</text>
<text x="2774" y="334" textLength="48" lengthAdjust="spacingAndGlyphs">Product</text>
<text x="2774" y="362" textLength="110" lengthAdjust="spacingAndGlyphs">Company Policies</text>
<text x="2790" y="247" font-size="11.500" fill="#5a6272" textLength="19" lengthAdjust="spacingAndGlyphs">wiki</text>
<text x="2755" y="712" textLength="51" lengthAdjust="spacingAndGlyphs">Settings</text>
<text x="2755" y="745" textLength="93" lengthAdjust="spacingAndGlyphs">Help &amp; Support</text>
</g>
<rect x="2722" y="681" width="225" height="1" fill="#dcdfe5"/>
<use href="#gear" x="2730" y="699" width="16" height="16" stroke="#3a4252" stroke-width="1.600"/>
<use href="#help" x="2730" y="733" width="16" height="16" stroke="#3a4252" stroke-width="1.500"/>
<!-- top / crumbs -->
<rect x="3245" y="9.500" width="421" height="31" rx="6" fill="#f7f8fa" stroke="#dfe2e8"/>
<use href="#search" x="3254" y="17" width="16" height="16" stroke="#4a5262" stroke-width="1.500"/>
<text x="3278" y="30" font-size="14" fill="#848a96" textLength="43" lengthAdjust="spacingAndGlyphs">Search</text>
<circle cx="3955" cy="25" r="13.500" fill="#eff0f4"/>
<circle cx="3955" cy="20.500" r="3.500" fill="none" stroke="#3a4252" stroke-width="1.300"/><path d="M3949 33c0-5 2-8 6-8s6 3 6 8" fill="none" stroke="#3a4252" stroke-width="1.300"/>
<use href="#bell" x="3986" y="14" width="20" height="22" stroke="#3a4252" stroke-width="1.500"/>
<g font-size="14" fill="#7a808c">
<text x="2988" y="83" textLength="37" lengthAdjust="spacingAndGlyphs">Home</text><text x="3034" y="83">/</text>
<text x="3048" y="83" textLength="110" lengthAdjust="spacingAndGlyphs">Engineering Team</text><text x="3167" y="83">/</text>
<text x="3181" y="83" textLength="88" lengthAdjust="spacingAndGlyphs">Project Aurora</text><text x="3279" y="83">/</text>
<text x="3293" y="83" fill="#2a3140" textLength="100" lengthAdjust="spacingAndGlyphs">Technical Specs</text></g>
<text x="3142" y="154" font-size="38" font-weight="400" fill="#172233" stroke="#172233" stroke-width=".15" textLength="585" lengthAdjust="spacingAndGlyphs">Project Aurora Technical Specifications</text>
<rect x="3142" y="172" width="696" height="2" fill="#6f9cc8"/>
<rect x="3142" y="188" width="438" height="39" rx="7" fill="#fff" stroke="#e4e6ea" filter="url(#sh3)"/>
<text x="3155" y="212" font-size="14" fill="#6a707c" textLength="54" lengthAdjust="spacingAndGlyphs">Formatic</text>
<use href="#chd" x="3227" y="203" width="9" height="9" stroke="#3a4252" stroke-width="2"/>
<g fill="#e0e2e6"><rect x="3248.500" y="195" width="1" height="25"/><rect x="3424.500" y="195" width="1" height="25"/><rect x="3474.500" y="195" width="1" height="25"/></g>
<rect x="3480" y="193" width="30" height="29" rx="4" fill="#e9f0f8"/><rect x="3513" y="193" width="29" height="29" rx="4" fill="#e9f0f8"/>
<g fill="#3a4252" text-anchor="middle" font-size="16">
<text x="3267" y="213" font-weight="700">B</text><text x="3298" y="213" class="i">I</text><text x="3330" y="212">U</text><text x="3362" y="212">A</text><text x="3443" y="212">T</text></g>
<path d="M3324 215.500h12" stroke="#3a4252"/>
<rect x="3353" y="214.500" width="18" height="2.500" fill="#111a2c"/>
<path d="M3390 213l-3 1 1-4 6-8 2 2z" fill="none" stroke="#3a4252" stroke-width="1"/><rect x="3385" y="214" width="16" height="2" fill="#d8e4f0"/>
<path d="M3438 215.500h2M3443 215.500h1" stroke="#3a4252"/>
<use href="#chd" x="3405" y="203" width="9" height="9" stroke="#3a4252" stroke-width="2"/>
<use href="#chd" x="3455" y="203" width="9" height="9" stroke="#3a4252" stroke-width="2"/>
<use href="#img" x="3486" y="199" width="18" height="18" stroke="#3a4252" stroke-width="1.500"/>
<use href="#db" x="3519" y="199" width="17" height="18" stroke="#3a4252" stroke-width="1.500"/>
<path d="M3556 202l-4 6 4 6M3566 202l4 6-4 6M3562 200l-2 16" fill="none" stroke="#3a4252" stroke-width="1"/>
<g font-size="15" fill="#252d3c">
<text x="3142" y="252" textLength="653" lengthAdjust="spacingAndGlyphs">Introducing to Project Aurora. Technical project ınstains a nvatnate thatedʌctrdiieved bsıntern computing</text>
<text x="3142" y="271" textLength="682" lengthAdjust="spacingAndGlyphs">project, sanro:nnfresom links, documentative sitnuations and gon li?ow project, huild projects genetic erarsting</text>
<text x="3142" y="290" textLength="344" lengthAdjust="spacingAndGlyphs">development solutions &amp; comporation, with this project.</text>
<text x="3167" y="341" textLength="320" lengthAdjust="spacingAndGlyphs">Improve the technical tenner provoning key features</text>
<text x="3167" y="366" textLength="295" lengthAdjust="spacingAndGlyphs">Disllros/setrzunl mnxonirts and inyalnpps values</text>
<text x="3167" y="392" textLength="330" lengthAdjust="spacingAndGlyphs">Private apport serviꝍss and development ondponents</text>
<text x="3167" y="417" textLength="282" lengthAdjust="spacingAndGlyphs">Customize refrageration impovement projects</text>
</g>
<g fill="#252d3c"><circle cx="3154" cy="336.500" r="1.800"/><circle cx="3154" cy="361.500" r="1.800"/><circle cx="3154" cy="387.500" r="1.800"/><circle cx="3154" cy="412.500" r="1.800"/></g>
<g fill="#c0c4cc"><circle cx="3126" cy="242" r="1"/><circle cx="3130" cy="242" r="1"/><circle cx="3126" cy="247" r="1"/><circle cx="3130" cy="247" r="1"/><circle cx="3126" cy="252" r="1"/><circle cx="3130" cy="252" r="1"/>
<circle cx="3126" cy="331" r="1"/><circle cx="3130" cy="331" r="1"/><circle cx="3126" cy="336" r="1"/><circle cx="3130" cy="336" r="1"/><circle cx="3126" cy="341" r="1"/><circle cx="3130" cy="341" r="1"/>
<circle cx="3126" cy="466" r="1"/><circle cx="3130" cy="466" r="1"/><circle cx="3126" cy="471" r="1"/><circle cx="3130" cy="471" r="1"/><circle cx="3126" cy="476" r="1"/><circle cx="3130" cy="476" r="1"/></g>
<rect x="3851" y="236" width="28" height="57" rx="5" fill="#fff" stroke="#e6e8ec" filter="url(#sh3)"/>
<text x="3865" y="259" font-size="17" fill="#252d3c" text-anchor="middle">/</text>
<rect x="3858" y="272" width="9" height="9" rx="2" fill="none" stroke="#3a4252"/><rect x="3862" y="277" width="9" height="9" rx="2" fill="#fff" stroke="#3a4252"/>
<rect x="3142" y="310" width="696" height="1" fill="#e4e6ea"/>
<rect x="3142" y="436" width="696" height="2" fill="#e8eaee"/>
<rect x="3154" y="464" width="13" height="15" rx="1.500" fill="none" stroke="#3a4252" stroke-width="1.300"/><path d="M3154 469h13M3154 474h13M3159 464v15" stroke="#3a4252"/>
<text x="3175" y="476" font-size="14.500" font-weight="700" fill="#1d2430" textLength="176" lengthAdjust="spacingAndGlyphs">Development Sprint Tracker</text>
<g fill="#5a6272"><circle cx="3823.500" cy="471" r="1.100"/><circle cx="3828" cy="471" r="1.100"/><circle cx="3832.500" cy="471" r="1.100"/></g>
<!-- table -->
<rect x="3152" y="490" width="686" height="124" rx="6" fill="#fff" stroke="#dfe2e7"/>
<path d="M3152 521.500V496a6 6 0 0 1 6-6h674a6 6 0 0 1 6 6v25.500z" fill="#f4f5f8" stroke="#dfe2e7"/>
<g stroke="#dfe2e7"><path d="M3152 552.500h686M3152 583.500h686M3460.500 490v124M3609.500 490v124M3759 490v124" fill="none"/></g>
<g font-size="14" fill="#252d3c">
<text x="3160" y="511" fill="#5a6272" textLength="29" lengthAdjust="spacingAndGlyphs">Task</text>
<text x="3468" y="511" fill="#5a6272" textLength="40" lengthAdjust="spacingAndGlyphs">Status</text>
<text x="3617" y="511" fill="#5a6272" textLength="58" lengthAdjust="spacingAndGlyphs">Assignee</text>
<rect x="3469" y="527" width="63" height="20" rx="9" fill="#eeeff1"/><rect x="3469" y="558" width="63" height="20" rx="9" fill="#e6f0f9"/><rect x="3469" y="589" width="63" height="20" rx="9" fill="#eeeff1"/>
<text x="3160" y="542" textLength="120" lengthAdjust="spacingAndGlyphs">Project-ʌiased task</text>
<text x="3475" y="542" textLength="49" lengthAdjust="spacingAndGlyphs">Summer</text>
<text x="3617" y="542" textLength="82" lengthAdjust="spacingAndGlyphs">Bath-ıvannna</text>
<text x="3160" y="573" textLength="168" lengthAdjust="spacingAndGlyphs">Development sprint tracker</text>
<text x="3475" y="573" fill="#2f5f9a" textLength="48" lengthAdjust="spacingAndGlyphs">Running</text>
<text x="3617" y="573" textLength="82" lengthAdjust="spacingAndGlyphs">Dick-mamma</text>
<text x="3160" y="604" textLength="160" lengthAdjust="spacingAndGlyphs">Developmerat code orops</text>
<text x="3475" y="604" textLength="49" lengthAdjust="spacingAndGlyphs">Summer</text>
<text x="3617" y="604" textLength="72" lengthAdjust="spacingAndGlyphs">Jany Woton</text>
</g>
<rect x="3142" y="658" width="696" height="1" fill="#e4e6ea"/>
<path d="M3123 681l-3 5 3 5M3133 681l3 5-3 5M3129.500 680l-3 12" fill="none" stroke="#6a707c" stroke-width=".9"/>
<path d="M3152 768V682a8 8 0 0 1 8-8h670a8 8 0 0 1 8 8v86z" fill="#f4f6f8" stroke="#e4e6ea"/>
<g font-family="'Liberation Mono',monospace" font-size="12" fill="#2a3140">
<text x="3170" y="705"><tspan fill="#8a3c90">export default</tspan> =&gt; <tspan fill="#2a6a80">$tody</tspan> {</text>
<text x="3185" y="722"><tspan fill="#2a5c90">const</tspan> const.names = <tspan fill="#3a8a50">'roject/acoevgory'</tspan>);</text>
<text x="3185" y="740"><tspan fill="#8a3c90">for</tspan> (stoust.<tspan fill="#2a6a90">results</tspan>() =&gt; {</text>
<text x="3200" y="757"><tspan fill="#2a5c90">const</tspan> rcode = ap.asmatros.iast(<tspan fill="#3a8a50">'stent code, msoh'</tspan>)</text>
</g>
<rect x="4017" y="102" width="6" height="405" rx="3" fill="#e5e6ea"/>
</svg>
</body></html>
